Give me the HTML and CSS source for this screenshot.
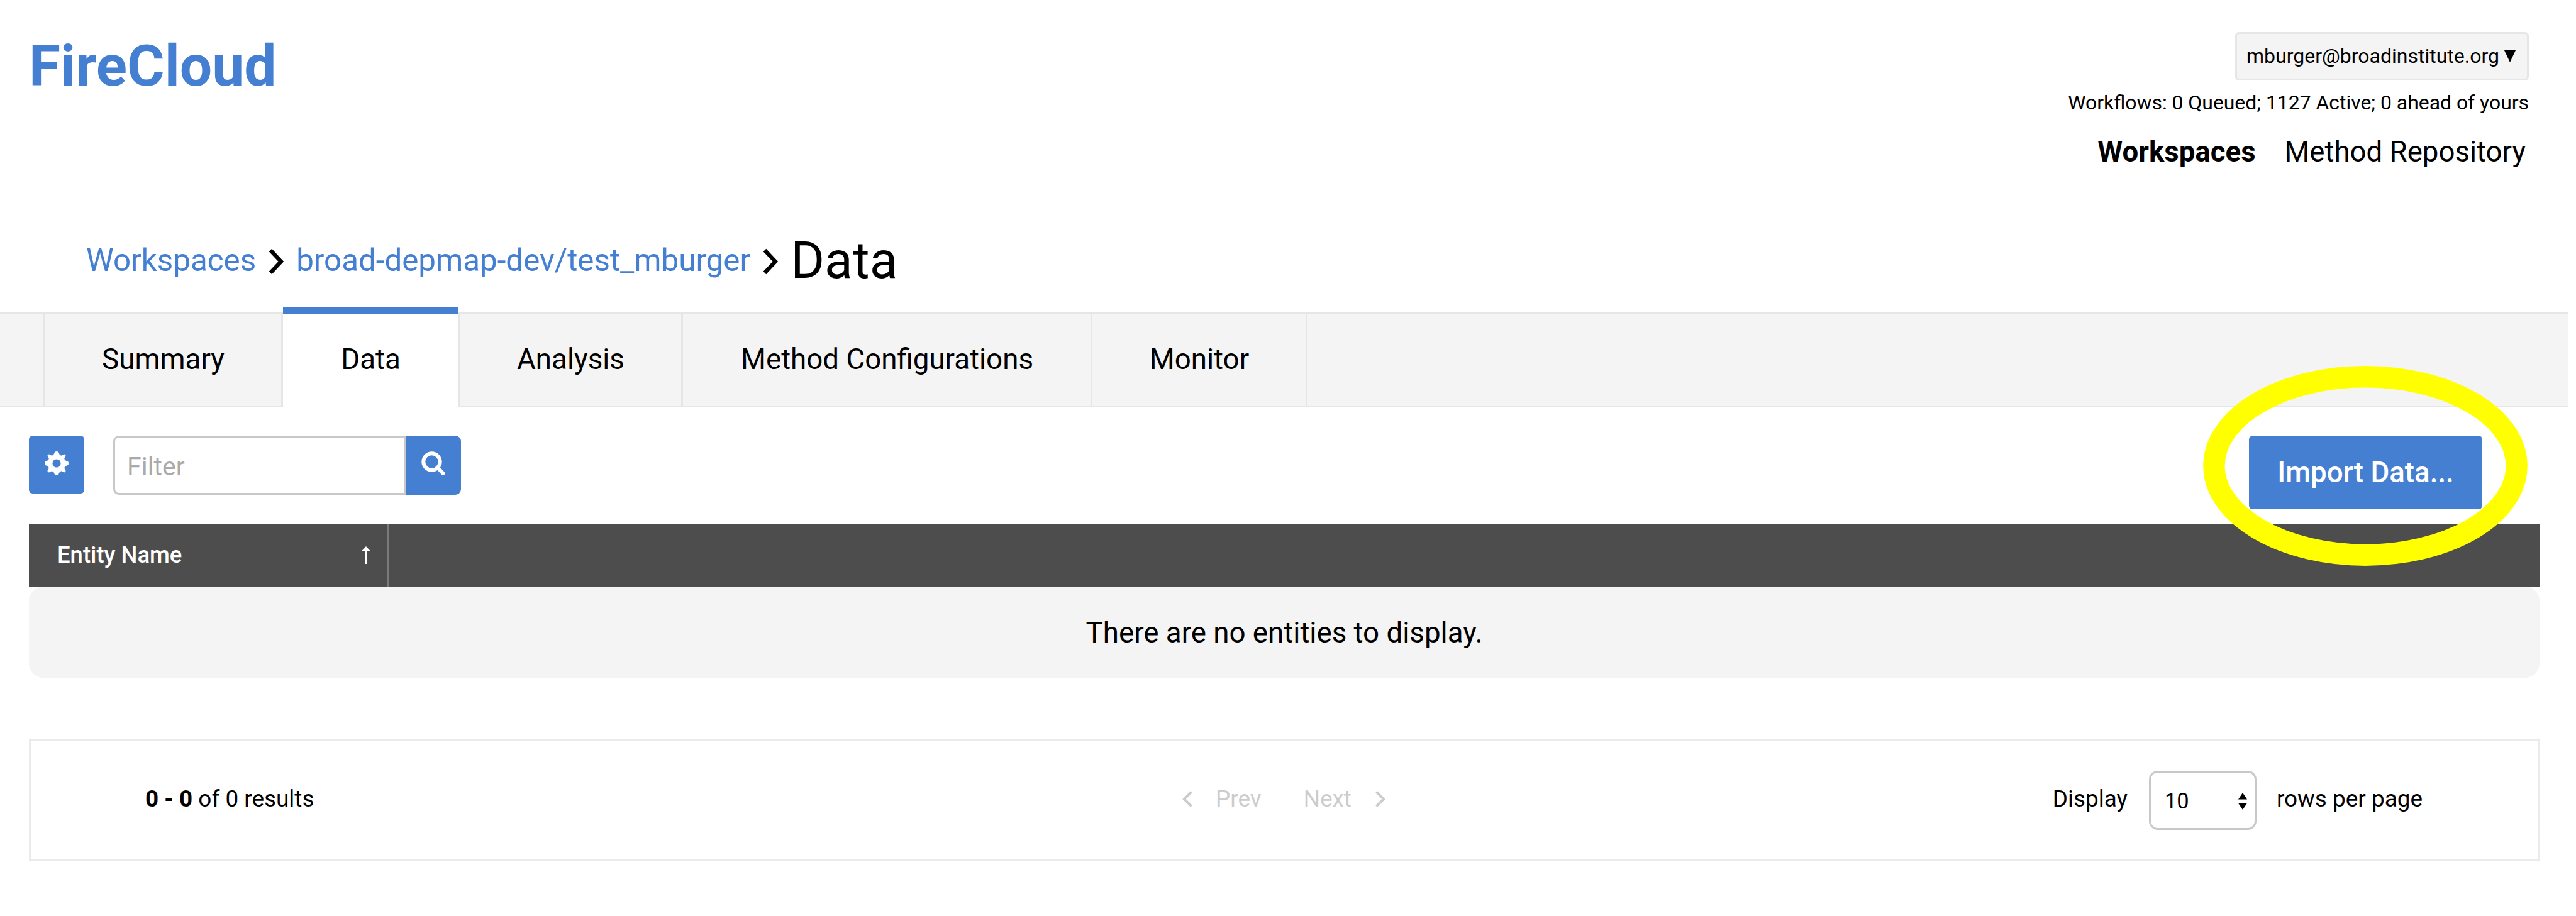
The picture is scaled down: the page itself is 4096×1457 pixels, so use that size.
FILE: index.html
```html
<!DOCTYPE html>
<html lang="en">
<head>
<meta charset="utf-8">
<title>FireCloud</title>
<link rel="stylesheet" href="styles.css">
</head>
<body>
<div class="page">
  <header class="header">
    <div class="logo">FireCloud</div>
    <div class="account">
      <div class="user-menu"><span>mburger@broadinstitute.org</span><svg class="caret" viewBox="0 0 18 19"><path d="M0 0H18L9 19Z"/></svg></div>
      <div class="queue">Workflows: 0 Queued; 1127 Active; 0 ahead of yours</div>
      <nav class="nav"><a class="nav-active">Workspaces</a><a>Method Repository</a></nav>
    </div>
  </header>

  <div class="breadcrumb">
    <a class="crumb">Workspaces</a>
    <svg class="crumb-sep" viewBox="0 0 24 42"><path d="M3 3L20 21L3 39"/></svg>
    <a class="crumb crumb-project">broad-depmap-dev/test_mburger</a>
    <svg class="crumb-sep" viewBox="0 0 24 42"><path d="M3 3L20 21L3 39"/></svg>
    <h1 class="title">Data</h1>
  </div>

  <div class="tabs">
    <a class="tab tab-summary">Summary</a>
    <a class="tab tab-data">Data</a>
    <a class="tab tab-analysis">Analysis</a>
    <a class="tab tab-configs">Method Configurations</a>
    <a class="tab tab-monitor">Monitor</a>
  </div>

  <main class="content">
    <div class="toolbar">
      <div class="settings"><svg class="icon" viewBox="-19 -19 38 38"><path fill-rule="evenodd" d="M-2.6 -18.6Q0 -19.4 2.6 -18.6L5 -13.4L7.6 -12.2L12 -14.6Q14.2 -14.2 14.6 -12L12.2 -7.6L13.4 -5L18.6 -2.6Q19.4 0 18.6 2.6L13.4 5L12.2 7.6L14.6 12Q14.2 14.2 12 14.6L7.6 12.2L5 13.4L2.6 18.6Q0 19.4 -2.6 18.6L-5 13.4L-7.6 12.2L-12 14.6Q-14.2 14.2 -14.6 12L-12.2 7.6L-13.4 5L-18.6 2.6Q-19.4 0 -18.6 -2.6L-13.4 -5L-12.2 -7.6L-14.6 -12Q-14.2 -14.2 -12 -14.6L-7.6 -12.2L-5 -13.4ZM0 -6.6A6.6 6.6 0 1 0 0 6.6A6.6 6.6 0 1 0 0 -6.6Z"/></svg></div>
      <div class="filter"><div class="filter-input">Filter</div><div class="filter-button"><svg class="icon icon-search" viewBox="0 0 38 38"><circle cx="16.5" cy="16.5" r="13.2"/><path d="M26 26L34.5 34.8"/></svg></div></div>
      <div class="import">Import Data...
        <svg class="highlight" viewBox="0 0 516 318"><ellipse cx="258" cy="159" rx="240.6" ry="141.7"/></svg>
      </div>
    </div>

    <div class="table-head">
      <div class="column"><span>Entity Name</span><svg class="sort" viewBox="0 0 14 28"><path d="M7 0L14 7.5H8.2V28H5.8V7.5H0Z"/></svg></div>
    </div>
    <div class="table-empty">There are no entities to display.</div>

    <div class="pager">
      <div class="results"><b>0 - 0</b> of 0 results</div>
      <div class="paging">
        <svg class="page-arrow" viewBox="0 0 17 26"><path d="M14.5 1.5L3 13L14.5 24.5"/></svg>
        <span class="prev">Prev</span>
        <span class="next">Next</span>
        <svg class="page-arrow" viewBox="0 0 17 26"><path d="M2.5 1.5L14 13L2.5 24.5"/></svg>
      </div>
      <div class="display"><span>Display</span>
        <div class="select"><span>10</span><svg class="select-arrows" viewBox="0 0 14 27"><path d="M7 0L14 10.4H0ZM0 16.6H14L7 27Z"/></svg></div>
        <span>rows per page</span></div>
    </div>
  </main>
</div>
</body>
</html>
```
FILE: styles.css
```css
* { box-sizing: border-box; }
body {
  margin: 0;
  background: #fff;
  color: #000;
  font: 45.7px/60px Roboto, sans-serif;
}
svg { display: block; flex: none; }
.page { width: 4084px; height: 1457px; }

.header {
  display: flex;
  justify-content: space-between;
  height: 364px;
  padding: 51px 63px 0 46px;
}
.logo { font-size: 91.2px; line-height: 108px; font-weight: 700; color: #457fd2; }
.account { display: flex; flex-direction: column; align-items: flex-end; }
.user-menu {
  display: flex;
  align-items: center;
  justify-content: space-between;
  width: 467px;
  height: 77px;
  padding: 0 8px 2px 15px;
  border: 3px solid #e6e6e6;
  border-radius: 6px;
  background: #f4f4f4;
  font-size: 32px;
  line-height: 40px;
}
.caret { width: 18px; height: 19px; margin: 2px 10px 0 0; }
.queue { margin-top: 15px; font-size: 31.9px; line-height: 40px; }
.nav { display: flex; gap: 46px; margin-top: 29px; padding-right: 5px; font-size: 45.6px; }
.nav-active { font-weight: 700; }

.breadcrumb { display: flex; align-items: center; height: 100px; padding-left: 137px; }
.crumb { color: #457fd2; font-size: 49.3px; }
.crumb-sep { width: 24px; height: 42px; margin: 4px 20px 0 20px; fill: none; stroke: #000; stroke-width: 6.2; }
.title { margin: 0; font-size: 82.2px; line-height: 100px; font-weight: 400; }

.tabs {
  display: flex;
  height: 152px;
  margin-top: 32px;
  padding-left: 68px;
  border-top: 3px solid #e6e6e6;
  border-bottom: 3px solid #e6e6e6;
  background: #f4f4f4;
}
.tab {
  display: flex;
  align-items: center;
  justify-content: center;
  padding-left: 1px;
  border-right: 3px solid #e6e6e6;
}
.tab-summary { width: 382px; border-left: 3px solid #e6e6e6; }
.tab-data {
  width: 278px;
  height: 160px;
  margin-top: -11px;
  padding-bottom: 3px;
  border-top: 11px solid #457fd2;
  border-right: 0;
  background: #fff;
}
.tab-analysis { width: 358px; border-left: 3px solid #e6e6e6; }
.tab-configs { width: 651px; }
.tab-monitor { width: 342px; }

.content { padding: 45px 46px 0 46px; }
.toolbar { display: flex; height: 140px; align-items: flex-start; }
.icon { width: 38px; height: 38px; fill: #fff; }
.icon-search { fill: none; stroke: #fff; stroke-width: 6; stroke-linecap: round; }
.settings {
  display: flex;
  align-items: center;
  justify-content: center;
  width: 88px;
  height: 92px;
  padding-bottom: 4px;
  border-radius: 6px;
  background: #457fd2;
}
.filter { display: flex; height: 94px; margin-left: 46px; }
.filter-input {
  width: 465px;
  padding: 16px 0 0 19px;
  border: 3px solid #c8c8c8;
  border-radius: 9px 0 0 9px;
  color: #aaa;
  font-size: 41px;
}
.filter-button {
  display: flex;
  align-items: center;
  justify-content: center;
  width: 88px;
  padding-bottom: 6px;
  border-radius: 0 9px 9px 0;
  background: #457fd2;
}
.import {
  position: relative;
  width: 371px;
  height: 117px;
  margin: 0 91px 0 auto;
  border-radius: 6px;
  background: #457fd2;
  color: #fff;
  font-weight: 500;
  line-height: 117px;
  text-align: center;
}
/* Ring drawn over the page around the import button */
.highlight {
  position: absolute;
  left: -73px;
  top: -111px;
  width: 516px;
  height: 318px;
  fill: none;
  stroke: #ff0;
  stroke-width: 34.4;
}

.table-head { display: flex; height: 100px; background: #4d4d4d; }
.column {
  display: flex;
  align-items: center;
  justify-content: space-between;
  width: 573px;
  padding: 0 27px 0 45px;
  border-right: 3px solid #7a7a7a;
  color: #fff;
  font-size: 36.5px;
  font-weight: 500;
}
.sort { width: 14px; height: 28px; fill: #fff; }
.table-empty {
  height: 145px;
  padding-top: 44px;
  border-radius: 23px;
  background: #f4f4f4;
  text-align: center;
}

.pager {
  display: grid;
  grid-template-columns: 1fr auto 1fr;
  align-items: center;
  height: 194px;
  margin-top: 97px;
  padding: 0 183px 3px 182px;
  border: 3px solid #ebebeb;
  font-size: 36.9px;
}
.paging { display: flex; align-items: center; color: #ccc; }
.page-arrow { width: 17px; height: 26px; fill: none; stroke: #ccc; stroke-width: 4; }
.prev { margin: 0 67px 0 36px; }
.next { margin-right: 37px; }
.display { display: flex; align-items: center; justify-content: flex-end; }
.select {
  display: flex;
  align-items: center;
  justify-content: space-between;
  width: 171px;
  height: 94px;
  margin: 5px 32px 0 34px;
  padding: 2px 12px 0 22px;
  border: 3px solid #c8c8c8;
  border-radius: 14px;
  font-size: 34.4px;
}
.select-arrows { width: 14px; height: 27px; }
```
